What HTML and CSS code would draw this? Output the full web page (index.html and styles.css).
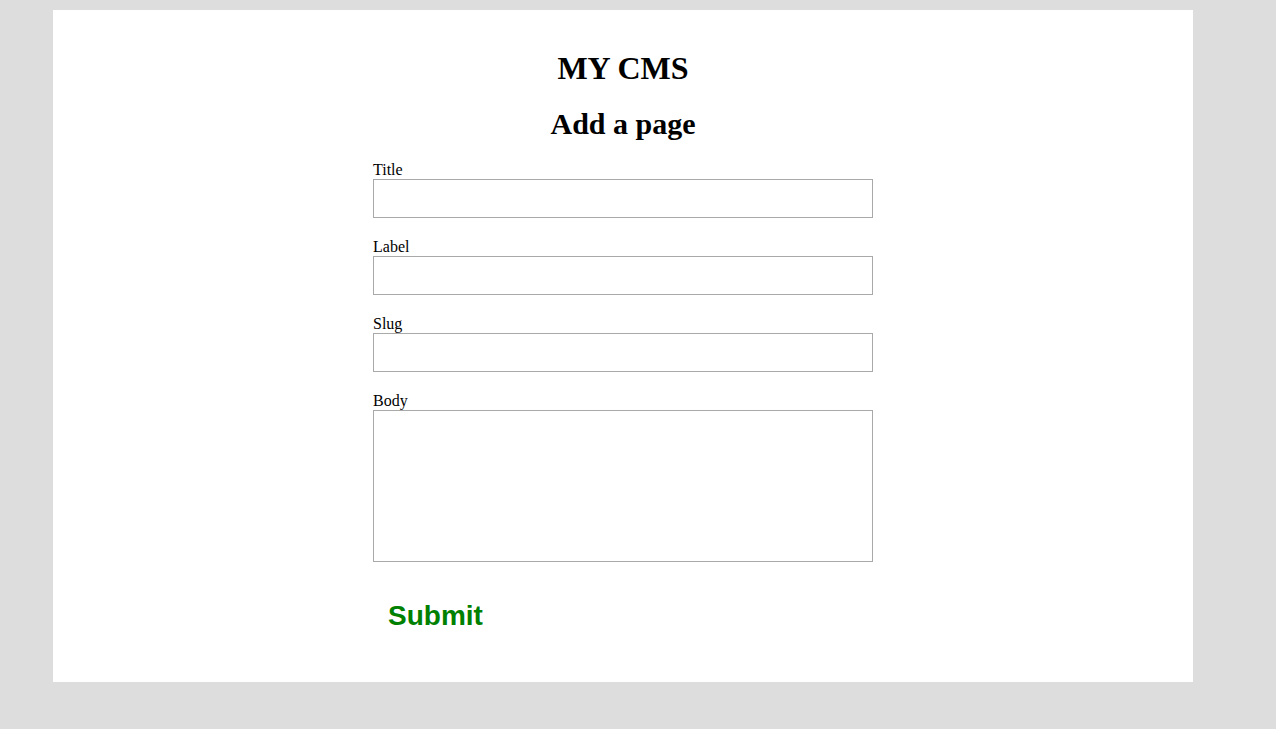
FILE: index.html
```html
<!DOCTYPE html>
<html>
<head>
<meta charset="utf-8">
<title>MY CMS</title>
<link rel="stylesheet" href="styles.css">
</head>
<body>
<div class="page">
  <h1 class="site-title">MY CMS</h1>
  <h2 class="page-title">Add a page</h2>
  <form class="page-form">
    <div class="field">
      <label class="field-label" for="title">Title</label>
      <input class="field-input" id="title" type="text">
    </div>
    <div class="field">
      <label class="field-label" for="label">Label</label>
      <input class="field-input" id="label" type="text">
    </div>
    <div class="field">
      <label class="field-label" for="slug">Slug</label>
      <input class="field-input" id="slug" type="text">
    </div>
    <div class="field">
      <label class="field-label" for="body">Body</label>
      <textarea class="field-textarea" id="body"></textarea>
    </div>
    <button class="submit-btn" type="submit">Submit</button>
  </form>
</div>
</body>
</html>
```
FILE: styles.css
```css
html, body {
  margin: 0;
  padding: 0;
}
body {
  background: #dddddd;
  font-family: "Liberation Serif", "Times New Roman", serif;
  color: #000;
}
.page {
  box-sizing: border-box;
  width: 1140px;
  height: 672px;
  margin: 10px 0 0 53px;
  padding-top: 40px;
  background: #ffffff;
}
.site-title {
  margin: 0;
  font-size: 32px;
  line-height: 36px;
  font-weight: bold;
  text-align: center;
}
.page-title {
  margin: 21px 0 0;
  font-size: 30px;
  line-height: 33px;
  font-weight: bold;
  text-align: center;
}
.page-form {
  width: 500px;
  margin: 21px auto 0;
}
.field {
  margin-bottom: 20px;
}
.field-label {
  display: block;
  font-size: 16px;
  line-height: 18px;
}
.field-input,
.field-textarea {
  display: block;
  box-sizing: border-box;
  width: 500px;
  margin: 0;
  padding: 4px 6px;
  border: 1px solid #a9a9a9;
  background: #fff;
  font-family: inherit;
  font-size: 16px;
  outline: none;
}
.field-input {
  height: 39px;
}
.field-textarea {
  height: 152px;
  resize: none;
}
.submit-btn {
  display: block;
  margin: 28px 0 0;
  padding: 10px 15px;
  border: none;
  background: transparent;
  color: #008000;
  font-family: "Liberation Sans", Arial, sans-serif;
  font-weight: bold;
  font-size: 28px;
  line-height: 32px;
  cursor: pointer;
}
```
